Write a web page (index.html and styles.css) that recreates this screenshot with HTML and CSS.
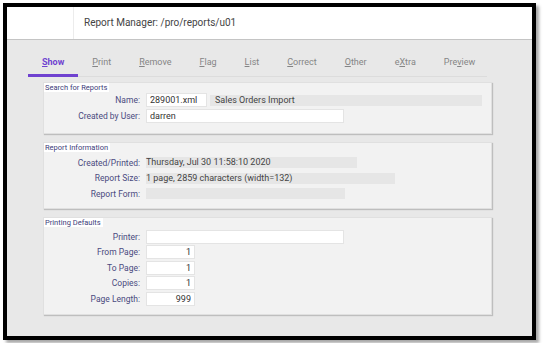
FILE: index.html
```html
<!DOCTYPE html>
<html lang="en">
<head>
    <meta charset="UTF-8">
    <title>Report Manager</title>
    <link rel="stylesheet" href="styles.css">
</head>
<body>
    <div class="frame">
        <header class="topbar">
            <div class="logo-cell"></div>
            <div class="title">Report Manager: /pro/reports/u01</div>
        </header>

        <main class="main">
            <nav class="tabs">
                <a class="tab active"><u>S</u>how</a>
                <a class="tab"><u>P</u>rint</a>
                <a class="tab"><u>R</u>emove</a>
                <a class="tab"><u>F</u>lag</a>
                <a class="tab"><u>L</u>ist</a>
                <a class="tab"><u>C</u>orrect</a>
                <a class="tab"><u>O</u>ther</a>
                <a class="tab">e<u>X</u>tra</a>
                <a class="tab">Pre<u>v</u>iew</a>
            </nav>

            <!-- Search -->
            <section class="panel panel-search">
                <div class="legend">Search for Reports</div>
                <div class="row">
                    <label>Name:</label>
                    <input class="field w-name" type="text" value="289001.xml">
                    <span class="readout w-desc">Sales Orders Import</span>
                </div>
                <div class="row">
                    <label>Created by User:</label>
                    <input class="field w-long" type="text" value="darren">
                </div>
            </section>

            <!-- Info -->
            <section class="panel panel-info">
                <div class="legend">Report Information</div>
                <div class="row">
                    <label>Created/Printed:</label>
                    <span class="readout w-created">Thursday, Jul 30 11:58:10 2020</span>
                </div>
                <div class="row">
                    <label>Report Size:</label>
                    <span class="readout w-size">1 page, 2859 characters (width=132)</span>
                </div>
                <div class="row">
                    <label>Report Form:</label>
                    <span class="readout w-form"></span>
                </div>
            </section>

            <!-- Printing -->
            <section class="panel panel-print">
                <div class="legend">Printing Defaults</div>
                <div class="row">
                    <label>Printer:</label>
                    <input class="field w-long" type="text" value="">
                </div>
                <div class="row">
                    <label>From Page:</label>
                    <input class="field num" type="text" value="1">
                </div>
                <div class="row">
                    <label>To Page:</label>
                    <input class="field num" type="text" value="1">
                </div>
                <div class="row">
                    <label>Copies:</label>
                    <input class="field num" type="text" value="1">
                </div>
                <div class="row">
                    <label>Page Length:</label>
                    <input class="field num" type="text" value="999">
                </div>
            </section>
        </main>
    </div>
</body>
</html>
```

FILE: styles.css
```css
:root {
    --purple: #6f42d0;
    --label: #4a4a80;
    --panel: #f2f2f2;
    --page: #e8e8e8;
}

* {
    box-sizing: border-box;
}

body {
    margin: 0;
    background: #fff;
    font-family: Roboto, 'Liberation Sans', sans-serif;
}

.frame {
    margin: 3px;
    width: 533px;
    height: 337px;
    border: 4px solid #000;
    background: var(--page);
    box-shadow: 3px 3px 3px rgba(0, 0, 0, 0.35);
    display: flex;
    flex-direction: column;
}

.topbar {
    display: flex;
    height: 33px;
    background: #fff;
    border-bottom: 1px solid #c4c4c4;
}

.logo-cell {
    width: 67px;
    border-right: 1px solid #ececec;
}

.title {
    padding-left: 10px;
    font-size: 10px;
    line-height: 32px;
    color: #444;
}

.main {
    padding-left: 21px;
}

.tabs {
    display: flex;
    width: 459px;
    height: 37px;
    border-bottom: 1px solid #dcdcdc;
}

.tab {
    position: relative;
    padding: 17px 14px 0;
    font-size: 9px;
    color: #858585;
}

.tab u {
    text-decoration-thickness: 1px;
    text-underline-offset: 1px;
}

.tab.active {
    color: var(--purple);
    font-weight: 700;
}

.tab.active::after {
    content: "";
    position: absolute;
    left: 0;
    right: 0;
    bottom: -1px;
    height: 3px;
    background: var(--purple);
}

.panel {
    width: 449px;
    margin-left: 15px;
    margin-top: 8px;
    background: var(--panel);
    border: 1px solid #e0e0e0;
    box-shadow: 1px 1px 1px rgba(0, 0, 0, 0.18);
}

.panel-search {
    margin-top: 5px;
    height: 52px;
}

.panel-info {
    height: 67px;
}

.panel-print {
    height: 98px;
}

.legend {
    width: max-content;
    background: #fff;
    padding: 0 2px 0 1px;
    font-size: 7.5px;
    line-height: 9px;
    color: #3d3d7a;
}

.row {
    display: flex;
    align-items: center;
    gap: 6px;
    height: 16px;
}

.panel-info .row,
.panel-print .row {
    height: 15.5px;
}

.panel-info .legend {
    margin-bottom: 3px;
}

.panel-print .legend {
    margin-bottom: 2px;
}

.row label {
    width: 96px;
    text-align: right;
    font-size: 8.5px;
    color: var(--label);
}

.field {
    height: 14px;
    border: 1px solid #e4e4e4;
    background: #fff;
    padding: 0 3px;
    font-family: Roboto, 'Liberation Sans', sans-serif;
    font-size: 9px;
    color: #333;
    outline: none;
}

.field.num {
    width: 49px;
    text-align: right;
}

.w-name {
    width: 61px;
}

.w-long {
    width: 198px;
}

.readout {
    height: 11px;
    background: #e6e6e6;
    font-size: 9px;
    line-height: 11px;
    color: #444;
    white-space: nowrap;
}

.w-desc {
    width: 272px;
    margin-left: -3px;
    padding-left: 5px;
}

.w-created {
    width: 211px;
}

.w-size {
    width: 249px;
}

.w-form {
    width: 199px;
}
```
